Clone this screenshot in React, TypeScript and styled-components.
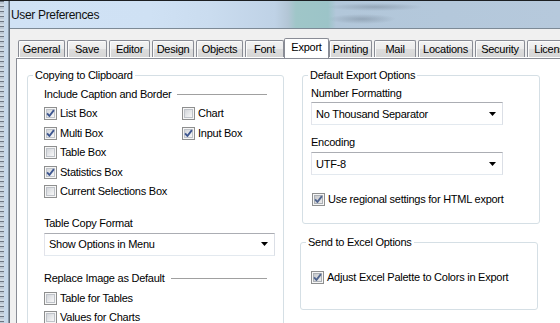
import React, { useId } from "react";
import styled, { createGlobalStyle } from "styled-components";

const Global = createGlobalStyle`
  html, body { margin: 0; padding: 0; overflow: hidden; background: #ffffff; }
  #root { width: 560px; height: 323px; overflow: hidden; background: #ffffff; }
`;

const FONT = `"Liberation Sans", Arial, sans-serif`;

const Screen = styled.div`
  display: flex;
  width: 560px;
  height: 323px;
  overflow: hidden;
  box-sizing: border-box;
  border-top: 1px solid #1c1f22;
  background: #ffffff;
  font-family: ${FONT};
  font-size: 11px;
  letter-spacing: -0.25px;
  color: #000;
`;

const GlassStrip = styled.div`
  flex: none;
  width: 9px;
  background:
    linear-gradient(90deg, transparent 0 4px, #c6d8ea 4px 8px, #8b99a7 8px 9px),
    repeating-linear-gradient(180deg, #6d7682 0 1px, #bcc8d4 1px 3px, #d0dae4 3px 5px);
`;

const Window = styled.div`
  flex: 1;
  min-width: 0;
  display: flex;
  flex-direction: column;
  border-left: 1px solid #5d6a78;
  background: #ffffff;
`;

const TitleBar = styled.div`
  flex: none;
  height: 27px;
  display: flex;
  align-items: center;
  padding-left: 1px;
  font-size: 12px;
  letter-spacing: -0.33px;
  color: #111;
  border-bottom: 1px solid #7d8a96;
  background:
    radial-gradient(ellipse 48px 4px at 365px 6px, rgba(70, 82, 96, 0.28), transparent),
    radial-gradient(ellipse 34px 5px at 352px 18px, rgba(70, 82, 96, 0.28), transparent),
    linear-gradient(90deg, #d0e2f5 0px, #cfe1f4 140px, #cadcef 200px, #bfd2e6 265px,
      #b3c6d6 278px, #9fc6c8 286px, #9cc4c8 318px, #b2c7da 326px, #b6c9dc 550px);
`;

/* Dialog body: grey above the tab panel and in the left margin, white where the panel is. */
const Client = styled.div`
  flex: 1;
  min-height: 0;
  display: grid;
  grid-template-rows: 20px 1fr;
  padding: 9px 0 0 6px;
  background:
    linear-gradient(180deg, #f0f0f0 0 28px, transparent 28px),
    linear-gradient(90deg, #f0f0f0 0 6px, #ffffff 6px);
`;

const TabStrip = styled.div`
  display: flex;
  align-items: flex-end;
  gap: 2px;
  height: 20px;
  padding-left: 2px;
  margin-bottom: -1px;
  overflow: hidden;
  position: relative;
  z-index: 1;
`;

const Tab = styled.div<{ $w: number; $active?: boolean }>`
  flex: none;
  box-sizing: border-box;
  width: ${(p) => p.$w}px;
  height: ${(p) => (p.$active ? 20 : 17)}px;
  margin: ${(p) => (p.$active ? "0 -2px" : "0 0 1px 0")};
  padding-bottom: ${(p) => (p.$active ? 3 : 0)}px;
  display: flex;
  align-items: center;
  justify-content: center;
  white-space: nowrap;
  border: 1px solid #898c95;
  border-bottom: none;
  border-radius: 2px 2px 0 0;
  background: ${(p) =>
    p.$active ? "#ffffff" : "linear-gradient(180deg, #f3f3f3 0%, #ebebeb 50%, #dddddd 51%, #d6d6d6 100%)"};
  box-shadow: ${(p) => (p.$active ? "none" : "inset 1px 1px 0 #fbfbfb")};
  position: relative;
  z-index: ${(p) => (p.$active ? 2 : 1)};
`;

const Panel = styled.div`
  min-height: 0;
  display: flex;
  align-items: flex-start;
  gap: 16px;
  padding: 10px 0 0 10px;
  background: #ffffff;
  border-top: 1px solid #898c95;
  border-left: 1px solid #898c95;
  overflow: hidden;
`;

const Group = styled.fieldset<{ $w: number; $ml?: number; $mt?: number; $h?: number }>`
  flex: none;
  box-sizing: border-box;
  width: ${(p) => p.$w}px;
  ${(p) => (p.$h ? `height: ${p.$h}px;` : "")}
  margin: ${(p) => p.$mt ?? 0}px 0 0 ${(p) => p.$ml ?? 0}px;
  padding: 0;
  min-width: 0;
  border: 1px solid #d5dfe5;
  border-radius: 3px;
`;

const Legend = styled.legend`
  margin-left: 5px;
  padding: 0 2px;
  line-height: 13px;
`;

const GroupBody = styled.div<{ $pad: string }>`
  padding: ${(p) => p.$pad};
  display: flex;
  flex-direction: column;
  align-items: flex-start;
`;

const RightColumn = styled.div`
  flex: none;
  width: 240px;
  display: flex;
  flex-direction: column;
`;

const SubHeader = styled.div<{ $mt: number }>`
  align-self: stretch;
  display: flex;
  align-items: center;
  gap: 6px;
  margin-top: ${(p) => p.$mt}px;
  margin-right: 7px;
  line-height: 13px;
  white-space: nowrap;
`;

const Rule = styled.div`
  flex: 1;
  height: 0;
  border-top: 1px solid #a0a0a0;
`;

const CheckGrid = styled.div<{ $mt: number; $row: number; $cols: string }>`
  display: grid;
  grid-template-columns: ${(p) => p.$cols};
  grid-auto-rows: ${(p) => p.$row}px;
  margin-top: ${(p) => p.$mt}px;
`;

const CheckRow = styled.label<{ $mt?: number; $ml?: number }>`
  display: flex;
  align-items: center;
  gap: 3px;
  line-height: 13px;
  white-space: nowrap;
  margin-top: ${(p) => p.$mt ?? 0}px;
  margin-left: ${(p) => p.$ml ?? 0}px;
  svg { flex: none; }
`;

const FieldLabel = styled.div<{ $mt: number }>`
  margin-top: ${(p) => p.$mt}px;
  line-height: 13px;
  white-space: nowrap;
`;

const Combo = styled.div<{ $w: number; $mt: number }>`
  box-sizing: border-box;
  width: ${(p) => p.$w}px;
  height: 23px;
  margin-top: ${(p) => p.$mt}px;
  display: flex;
  align-items: center;
  justify-content: space-between;
  padding: 0 6px 0 4px;
  background: #ffffff;
  border: 1px solid;
  border-color: #abadb3 #dbdfe6 #e3e9ef #e2e3ea;
  white-space: nowrap;
`;

function Arrow() {
  return (
    <svg width="7" height="4" viewBox="0 0 7 4">
      <path d="M0 0 H7 L3.5 4 Z" fill="#000" />
    </svg>
  );
}

function CheckBox({ checked, dim }: { checked?: boolean; dim?: boolean }) {
  const raw = useId();
  const id = "g" + raw.replace(/[^a-zA-Z0-9]/g, "");
  return (
    <svg width="13" height="13" viewBox="0 0 13 13">
      <defs>
        <linearGradient id={id} x1="0" y1="0" x2="1" y2="1">
          <stop offset="0" stopColor={dim ? "#c4c6c9" : "#d0d3d8"} />
          <stop offset="1" stopColor={dim ? "#eeeeee" : "#fafafa"} />
        </linearGradient>
      </defs>
      <rect x="0.5" y="0.5" width="12" height="12" fill="#f6f6f6" stroke="#8e8f8f" />
      <rect x="2.5" y="2.5" width="8" height="8" fill={`url(#${id})`} stroke={dim ? "#acb0b5" : "#bfc3c9"} />
      {checked && (
        <path
          d="M3.1 6.3 L5.4 9 L9.9 3.2"
          fill="none"
          stroke={dim ? "#50658f" : "#3d5690"}
          strokeWidth="1.9"
          strokeLinejoin="round"
        />
      )}
    </svg>
  );
}

function Check({ label, checked, dim, mt, ml }: { label: string; checked?: boolean; dim?: boolean; mt?: number; ml?: number }) {
  return (
    <CheckRow $mt={mt} $ml={ml}>
      <CheckBox checked={checked} dim={dim} />
      <span>{label}</span>
    </CheckRow>
  );
}

const tabs: { label: string; w: number; active?: boolean }[] = [
  { label: "General", w: 47 },
  { label: "Save", w: 40 },
  { label: "Editor", w: 41 },
  { label: "Design", w: 42 },
  { label: "Objects", w: 47 },
  { label: "Font", w: 39 },
  { label: "Export", w: 45, active: true },
  { label: "Printing", w: 43 },
  { label: "Mail", w: 42 },
  { label: "Locations", w: 55 },
  { label: "Security", w: 50 },
  { label: "Licenses", w: 56 },
];

export default function App() {
  return (
    <>
      <Global />
      <Screen>
        <GlassStrip />
        <Window>
          <TitleBar>User Preferences</TitleBar>
          <Client>
            <TabStrip>
              {tabs.map((t) => (
                <Tab key={t.label} $w={t.w} $active={t.active}>
                  {t.label}
                </Tab>
              ))}
            </TabStrip>
            <Panel>
              <Group $w={257} $h={320}>
                <Legend>Copying to Clipboard</Legend>
                <GroupBody $pad="0 9px 0 16px">
                  <SubHeader $mt={6}>
                    <span>Include Caption and Border</span>
                    <Rule />
                  </SubHeader>
                  <CheckGrid $mt={3} $row={19.5} $cols="138px auto">
                    <Check label="List Box" checked />
                    <Check label="Chart" />
                    <Check label="Multi Box" checked />
                    <Check label="Input Box" checked />
                    <Check label="Table Box" />
                    <span />
                    <Check label="Statistics Box" checked />
                    <span />
                    <Check label="Current Selections Box" />
                  </CheckGrid>
                  <FieldLabel $mt={15}>Table Copy Format</FieldLabel>
                  <Combo $w={231} $mt={3}>
                    <span>Show Options in Menu</span>
                    <Arrow />
                  </Combo>
                  <SubHeader $mt={16}>
                    <span>Replace Image as Default</span>
                    <Rule />
                  </SubHeader>
                  <CheckGrid $mt={5} $row={18.5} $cols="auto">
                    <Check label="Table for Tables" />
                    <Check label="Values for Charts" />
                  </CheckGrid>
                </GroupBody>
              </Group>
              <RightColumn>
                <Group $w={238} $ml={2}>
                  <Legend>Default Export Options</Legend>
                  <GroupBody $pad="0 0 17px 8px">
                    <FieldLabel $mt={5}>Number Formatting</FieldLabel>
                    <Combo $w={192} $mt={2}>
                      <span>No Thousand Separator</span>
                      <Arrow />
                    </Combo>
                    <FieldLabel $mt={11}>Encoding</FieldLabel>
                    <Combo $w={192} $mt={3}>
                      <span>UTF-8</span>
                      <Arrow />
                    </Combo>
                    <Check label="Use regional settings for HTML export" checked dim mt={18} ml={1} />
                  </GroupBody>
                </Group>
                <Group $w={238} $mt={12}>
                  <Legend>Send to Excel Options</Legend>
                  <GroupBody $pad="0 0 25px 10px">
                    <Check label="Adjust Excel Palette to Colors in Export" checked dim mt={22} />
                  </GroupBody>
                </Group>
              </RightColumn>
            </Panel>
          </Client>
        </Window>
      </Screen>
    </>
  );
}
